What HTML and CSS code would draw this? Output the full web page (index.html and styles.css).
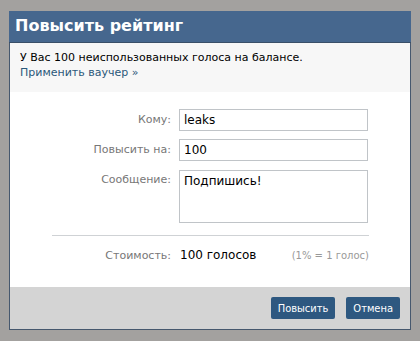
FILE: index.html
```html
<!DOCTYPE html>
<html lang="ru">
<head>
    <meta charset="UTF-8">
    <title>Повысить рейтинг</title>
    <link rel="stylesheet" href="styles.css">
</head>
<body>
    <div class="dialog">
        <div class="dialog-title">Повысить рейтинг</div>

        <div class="balance">
            У Вас 100 неиспользованных голоса на балансе.<br>
            <a href="#" class="voucher">Применить ваучер »</a>
        </div>

        <div class="rate-form">
            <label class="field-label" for="to">Кому:</label>
            <input class="field" type="text" id="to" value="leaks">

            <label class="field-label" for="amount">Повысить на:</label>
            <input class="field" type="text" id="amount" value="100">

            <label class="field-label" for="message">Сообщение:</label>
            <textarea class="field message" id="message">Подпишись!</textarea>
        </div>

        <div class="cost">
            <span class="field-label">Стоимость:</span>
            <span class="cost-value">100 голосов</span>
            <span class="cost-note">(1% = 1 голос)</span>
        </div>

        <div class="dialog-buttons">
            <button class="btn">Повысить</button>
            <button class="btn">Отмена</button>
        </div>
    </div>
</body>
</html>
```

FILE: styles.css
```css
body {
    margin: 0;
    padding: 11px 0 0 9px;
    background-color: #a3a19f;
    font-family: 'DejaVu Sans', Verdana, sans-serif;
    font-size: 11px;
    color: #000;
}

.dialog {
    width: 400px;
    border: 1px solid #46586e;
    border-top: none;
    background-color: #fff;
}

/* Header */
.dialog-title {
    height: 31px;
    line-height: 30px;
    padding-left: 6px;
    margin: 0 -1px;
    background-color: #46678e;
    border-bottom: 1px solid #3a4f68;
    color: #fff;
    font-size: 16px;
    font-weight: bold;
}

/* Balance info */
.balance {
    height: 49px;
    padding: 7px 10px 0;
    box-sizing: border-box;
    background-color: #f7f7f7;
    line-height: 15px;
}

.voucher {
    color: #2b587a;
    text-decoration: none;
}

/* Form */
.rate-form {
    display: grid;
    grid-template-columns: 161px 189px;
    column-gap: 8px;
    row-gap: 8px;
    padding-top: 17px;
}

.field-label {
    color: #777;
    text-align: right;
    padding-top: 4px;
}

.field {
    height: 22px;
    margin: 0;
    padding: 3px 4px;
    box-sizing: border-box;
    border: 1px solid #c0c4c8;
    font-family: 'DejaVu Sans', Verdana, sans-serif;
    font-size: 12px;
    color: #000;
}

.message {
    height: 53px;
    margin-top: 1px;
    resize: none;
}

/* Cost */
.cost {
    display: flex;
    align-items: baseline;
    margin: 12px 41px 0 42px;
    padding: 12px 0 0;
    border-top: 1px solid #cfd2d5;
    height: 39px;
}

.cost .field-label {
    width: 119px;
    padding: 0;
}

.cost-value {
    margin-left: 9px;
    font-size: 12px;
}

.cost-note {
    margin-left: auto;
    color: #999;
    font-size: 10px;
}

/* Footer */
.dialog-buttons {
    display: flex;
    justify-content: flex-end;
    gap: 11px;
    height: 42px;
    padding: 10px 10px 0 0;
    box-sizing: border-box;
    background-color: #d4d4d4;
}

.btn {
    height: 22px;
    padding: 0 7px;
    border: none;
    border-radius: 2px;
    background-color: #2e5880;
    color: #fff;
    font-family: 'DejaVu Sans', Verdana, sans-serif;
    font-stretch: condensed;
    font-size: 11px;
    cursor: pointer;
}
```
